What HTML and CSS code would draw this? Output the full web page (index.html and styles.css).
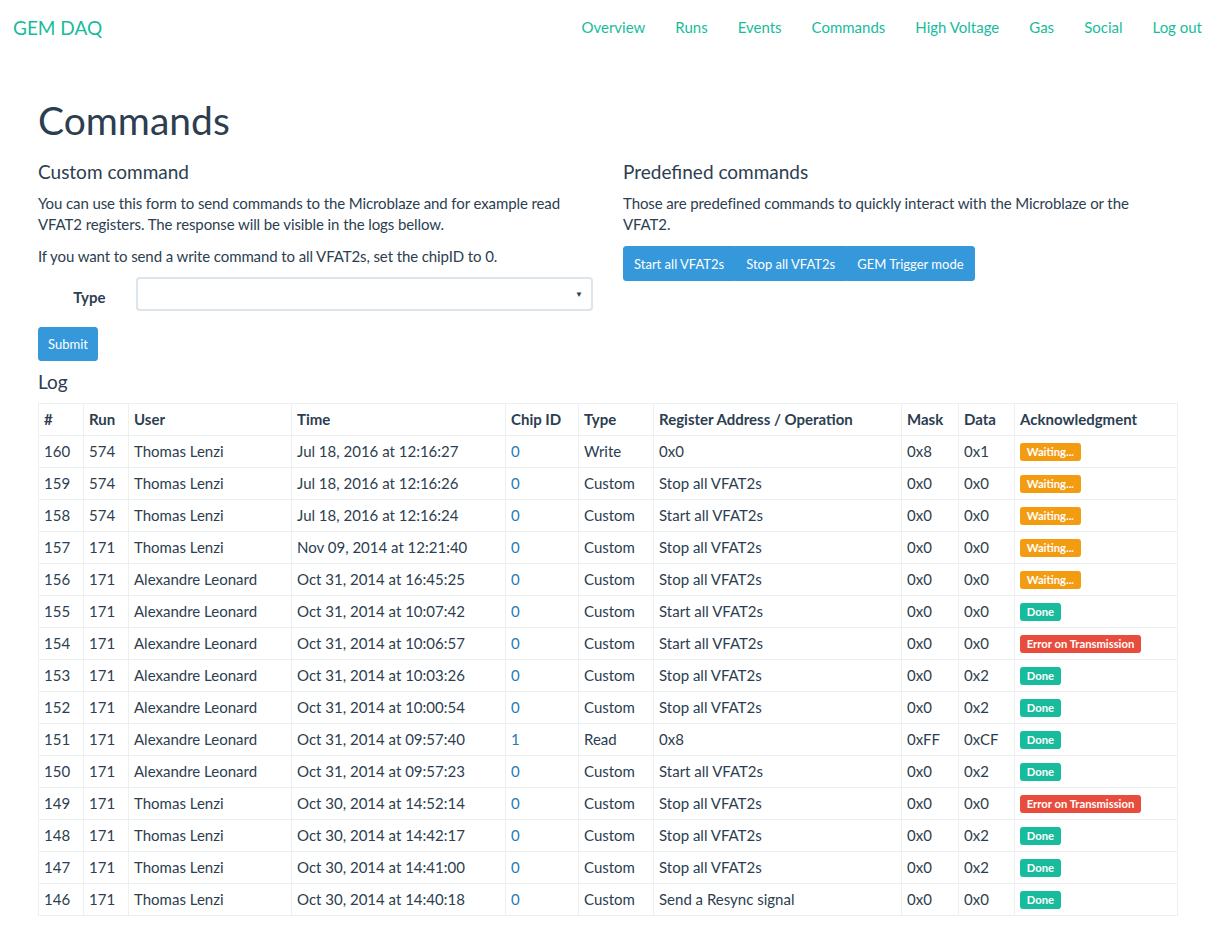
FILE: index.html
```html
<!DOCTYPE html>
<html>
<head>
<meta charset="utf-8">
<title>Commands - GEM DAQ</title>
<link rel="stylesheet" href="styles.css">
</head>
<body>
<nav class="navbar">
  <a class="brand" href="#">GEM DAQ</a>
  <ul class="nav">
    <li><a href="#">Overview</a></li>
    <li><a href="#">Runs</a></li>
    <li><a href="#">Events</a></li>
    <li><a href="#">Commands</a></li>
    <li><a href="#">High Voltage</a></li>
    <li><a href="#">Gas</a></li>
    <li><a href="#">Social</a></li>
    <li><a href="#">Log out</a></li>
  </ul>
</nav>
<main class="container">
  <h1 class="title">Commands</h1>
  <div class="row">
    <section class="col">
      <h4 class="subtitle">Custom command</h4>
      <p>You can use this form to send commands to the Microblaze and for example read VFAT2 registers. The response will be visible in the logs bellow.</p>
      <p>If you want to send a write command to all VFAT2s, set the chipID to 0.</p>
      <form class="form">
        <div class="form-group">
          <label class="form-label">Type</label>
          <div class="form-field"><div class="select"><span class="caret">&#9660;</span></div></div>
        </div>
        <button type="button" class="btn">Submit</button>
      </form>
    </section>
    <section class="col">
      <h4 class="subtitle">Predefined commands</h4>
      <p>Those are predefined commands to quickly interact with the Microblaze or the VFAT2.</p>
      <div class="btn-group">
        <button type="button" class="btn">Start all VFAT2s</button><button type="button" class="btn">Stop all VFAT2s</button><button type="button" class="btn">GEM Trigger mode</button>
      </div>
    </section>
  </div>
  <h4 class="subtitle log-title">Log</h4>
  <table class="log">
    <colgroup>
      <col class="c-id"><col class="c-run"><col class="c-user"><col class="c-time"><col class="c-chip"><col class="c-type"><col class="c-reg"><col class="c-mask"><col class="c-data"><col class="c-ack">
    </colgroup>
    <thead>
      <tr><th>#</th><th>Run</th><th>User</th><th>Time</th><th>Chip ID</th><th>Type</th><th>Register Address / Operation</th><th>Mask</th><th>Data</th><th>Acknowledgment</th></tr>
    </thead>
    <tbody>
      <tr><td>160</td><td>574</td><td>Thomas Lenzi</td><td>Jul 18, 2016 at 12:16:27</td><td><a class="chip">0</a></td><td>Write</td><td>0x0</td><td>0x8</td><td>0x1</td><td><span class="label warning">Waiting...</span></td></tr>
      <tr><td>159</td><td>574</td><td>Thomas Lenzi</td><td>Jul 18, 2016 at 12:16:26</td><td><a class="chip">0</a></td><td>Custom</td><td>Stop all VFAT2s</td><td>0x0</td><td>0x0</td><td><span class="label warning">Waiting...</span></td></tr>
      <tr><td>158</td><td>574</td><td>Thomas Lenzi</td><td>Jul 18, 2016 at 12:16:24</td><td><a class="chip">0</a></td><td>Custom</td><td>Start all VFAT2s</td><td>0x0</td><td>0x0</td><td><span class="label warning">Waiting...</span></td></tr>
      <tr><td>157</td><td>171</td><td>Thomas Lenzi</td><td>Nov 09, 2014 at 12:21:40</td><td><a class="chip">0</a></td><td>Custom</td><td>Stop all VFAT2s</td><td>0x0</td><td>0x0</td><td><span class="label warning">Waiting...</span></td></tr>
      <tr><td>156</td><td>171</td><td>Alexandre Leonard</td><td>Oct 31, 2014 at 16:45:25</td><td><a class="chip">0</a></td><td>Custom</td><td>Stop all VFAT2s</td><td>0x0</td><td>0x0</td><td><span class="label warning">Waiting...</span></td></tr>
      <tr><td>155</td><td>171</td><td>Alexandre Leonard</td><td>Oct 31, 2014 at 10:07:42</td><td><a class="chip">0</a></td><td>Custom</td><td>Start all VFAT2s</td><td>0x0</td><td>0x0</td><td><span class="label success">Done</span></td></tr>
      <tr><td>154</td><td>171</td><td>Alexandre Leonard</td><td>Oct 31, 2014 at 10:06:57</td><td><a class="chip">0</a></td><td>Custom</td><td>Start all VFAT2s</td><td>0x0</td><td>0x0</td><td><span class="label danger">Error on Transmission</span></td></tr>
      <tr><td>153</td><td>171</td><td>Alexandre Leonard</td><td>Oct 31, 2014 at 10:03:26</td><td><a class="chip">0</a></td><td>Custom</td><td>Stop all VFAT2s</td><td>0x0</td><td>0x2</td><td><span class="label success">Done</span></td></tr>
      <tr><td>152</td><td>171</td><td>Alexandre Leonard</td><td>Oct 31, 2014 at 10:00:54</td><td><a class="chip">0</a></td><td>Custom</td><td>Stop all VFAT2s</td><td>0x0</td><td>0x2</td><td><span class="label success">Done</span></td></tr>
      <tr><td>151</td><td>171</td><td>Alexandre Leonard</td><td>Oct 31, 2014 at 09:57:40</td><td><a class="chip">1</a></td><td>Read</td><td>0x8</td><td>0xFF</td><td>0xCF</td><td><span class="label success">Done</span></td></tr>
      <tr><td>150</td><td>171</td><td>Alexandre Leonard</td><td>Oct 31, 2014 at 09:57:23</td><td><a class="chip">0</a></td><td>Custom</td><td>Start all VFAT2s</td><td>0x0</td><td>0x2</td><td><span class="label success">Done</span></td></tr>
      <tr><td>149</td><td>171</td><td>Thomas Lenzi</td><td>Oct 30, 2014 at 14:52:14</td><td><a class="chip">0</a></td><td>Custom</td><td>Stop all VFAT2s</td><td>0x0</td><td>0x0</td><td><span class="label danger">Error on Transmission</span></td></tr>
      <tr><td>148</td><td>171</td><td>Thomas Lenzi</td><td>Oct 30, 2014 at 14:42:17</td><td><a class="chip">0</a></td><td>Custom</td><td>Stop all VFAT2s</td><td>0x0</td><td>0x2</td><td><span class="label success">Done</span></td></tr>
      <tr><td>147</td><td>171</td><td>Thomas Lenzi</td><td>Oct 30, 2014 at 14:41:00</td><td><a class="chip">0</a></td><td>Custom</td><td>Stop all VFAT2s</td><td>0x0</td><td>0x2</td><td><span class="label success">Done</span></td></tr>
      <tr><td>146</td><td>171</td><td>Thomas Lenzi</td><td>Oct 30, 2014 at 14:40:18</td><td><a class="chip">0</a></td><td>Custom</td><td>Send a Resync signal</td><td>0x0</td><td>0x0</td><td><span class="label success">Done</span></td></tr>
    </tbody>
  </table>
</main>
</body>
</html>
```

FILE: styles.css
```css
* { box-sizing: border-box; }
html, body { margin: 0; padding: 0; }
body {
  font-family: Lato, "Liberation Sans", sans-serif;
  font-size: 15px;
  line-height: 1.428571;
  color: #2c3e50;
  background: #fff;
}
a { text-decoration: none; }

.navbar {
  display: flex;
  justify-content: space-between;
  align-items: center;
  height: 55px;
}
.brand {
  color: #18bc9c;
  font-size: 19px;
  line-height: 21px;
  padding: 0 15px 0 13px;
  margin-top: -1px;
}
.nav {
  display: flex;
  list-style: none;
  margin: 0;
  padding: 0 12px 0 0;
}
.nav a {
  display: block;
  color: #18bc9c;
  padding: 0 15px;
  line-height: 21px;
  margin-top: -1px;
}
.nav li:last-child a { padding-right: 0; }

.container {
  width: 1170px;
  margin: 0 0 0 calc(50% - 584px);
  padding: 0 15px;
}
.title {
  font-size: 39px;
  font-weight: 400;
  line-height: 1.1;
  margin: 44px 0 10px;
}
.row {
  display: flex;
  margin: 0 -15px;
}
.col {
  width: 50%;
  padding: 0 15px;
}
.subtitle {
  font-size: 19px;
  font-weight: 400;
  line-height: 1.1;
  margin: 10.5px 0 9.5px;
}
p {
  margin: 0 0 10px;
  letter-spacing: -0.1px;
}

.form-group {
  display: flex;
  align-items: flex-start;
  margin: 0 -15px 16px;
}
.form-label {
  width: 97.5px;
  padding: 10px 15px 0;
  line-height: 21px;
  text-align: right;
  font-weight: 700;
}
.form-field {
  flex: 1;
  padding: 0 15px;
}
.select {
  height: 34px;
  border: 2px solid #dce4ec;
  border-radius: 4px;
  background: #fff;
  display: flex;
  justify-content: flex-end;
  align-items: center;
  padding-right: 8px;
}
.caret {
  font-size: 8px;
  color: #2c3e50;
  line-height: 1;
}

.btn {
  font-family: Lato, "Liberation Sans", sans-serif;
  font-size: 13px;
  line-height: 20px;
  padding: 6px 9px;
  border: 1px solid #3498db;
  background: #3498db;
  color: #fff;
  border-radius: 3px;
  cursor: pointer;
}
.btn-group { display: inline-flex; }
.btn-group .btn { border-radius: 0; padding: 7px 10px 6px; }
.btn-group .btn:first-child { border-radius: 3px 0 0 3px; }
.btn-group .btn:last-child { border-radius: 0 3px 3px 0; }

.log-title { margin: 11px 0 10.5px; }

.log {
  width: 100%;
  table-layout: fixed;
  border-collapse: collapse;
  border: 1px solid #ecf0f1;
  margin-bottom: 27px;
}
.log th, .log td {
  border: 1px solid #ecf0f1;
  padding: 5px;
  line-height: 21px;
  text-align: left;
  vertical-align: middle;
  white-space: nowrap;
}
.log th { font-weight: 700; }
.c-id { width: 45px; }
.c-run { width: 45px; }
.c-user { width: 163px; }
.c-time { width: 214px; }
.c-chip { width: 73px; }
.c-type { width: 75px; }
.c-reg { width: 248px; }
.c-mask { width: 57px; }
.c-data { width: 56px; }
.c-ack { width: 163px; }
.chip { color: #2a7ab3; }

.label {
  display: inline-block;
  font-size: 11.25px;
  font-weight: 700;
  line-height: 1;
  color: #fff;
  padding: 3.4px 6.75px 3.4px;
  border-radius: 3px;
  vertical-align: 1px;
}
.warning { background: #f39c12; }
.success { background: #18bc9c; }
.danger { background: #e74c3c; }
```
